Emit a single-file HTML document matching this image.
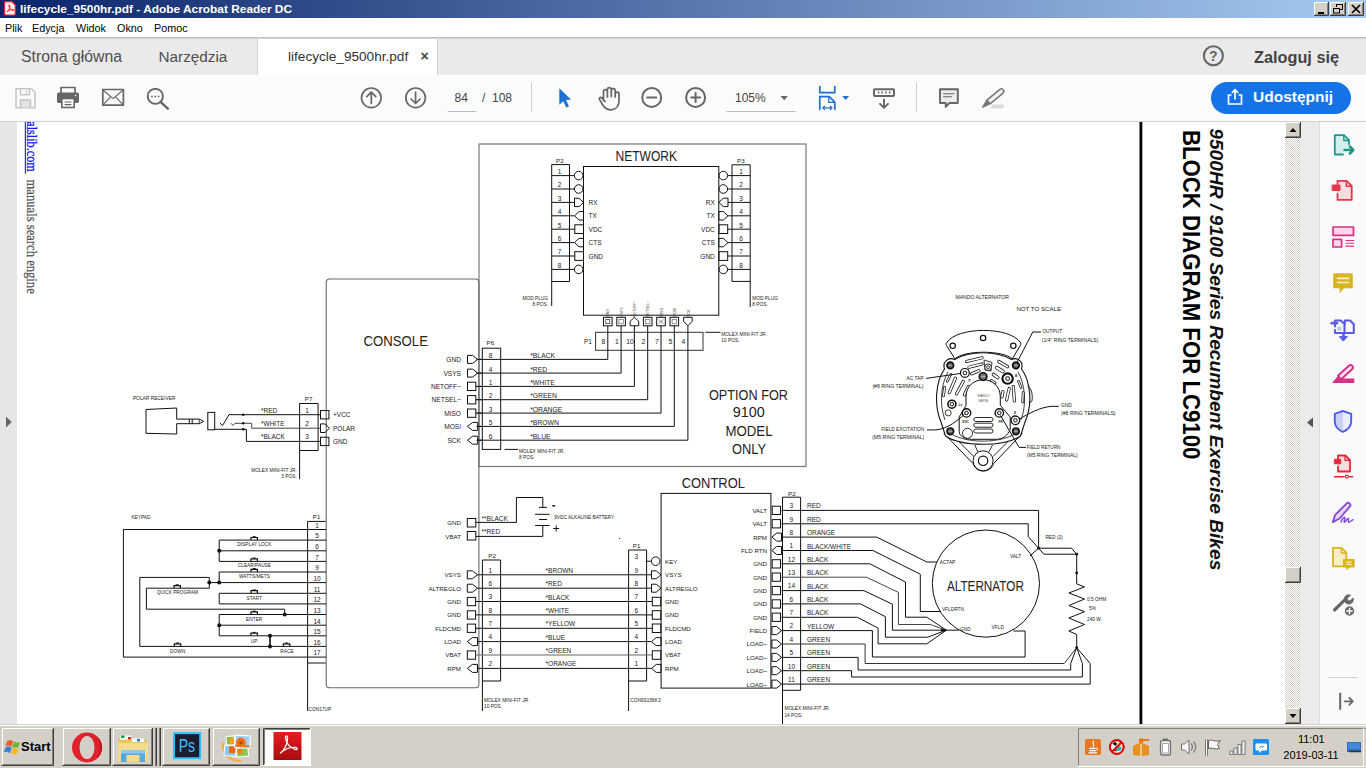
<!DOCTYPE html>
<html><head><meta charset="utf-8">
<style>
*{box-sizing:border-box;margin:0;padding:0}
html,body{width:1366px;height:768px;overflow:hidden;background:#fff;font-family:"Liberation Sans",sans-serif;}
.abs{position:absolute}
#title{left:0;top:0;width:1366px;height:18px;background:linear-gradient(90deg,#0a246a 0%,#a6caf0 100%);}
#title .t{left:20px;top:1px;color:#fff;font-weight:bold;font-size:12.5px;line-height:16px;white-space:nowrap}
#menu{left:0;top:18px;width:1366px;height:20px;background:#fff;border-bottom:1px solid #c0c0c0}
#menu span{position:absolute;top:3px;font-size:10.800px;line-height:14px;color:#000}
#tabs{left:0;top:38px;width:1366px;height:37px;background:#eaeaea;border-top:1px solid #d4d4d4}
#tabs .tb{position:absolute;top:8px;font-size:16px;line-height:20px;color:#505050;white-space:nowrap}
#atab{left:257px;top:0;width:181px;height:36px;background:#fff;border-left:1px solid #d0d0d0;border-right:1px solid #d0d0d0}
#tool{left:0;top:75px;width:1366px;height:47px;background:#fbfbfb;border-bottom:1px solid #cfcfcf}
#doc{left:0;top:122px;width:1366px;height:602px;background:#fff}
#lstrip{left:0;top:122px;width:17px;height:602px;background:#e6e6e6}
#task{left:0;top:724px;width:1366px;height:44px;background:#d4d0c8}
.tbtn{position:absolute;top:3px;height:40px;border:1px solid;border-color:#fff #404040 #404040 #fff;box-shadow:inset -1px -1px 0 #808080;background:#d4d0c8}
</style></head><body>
<div id="title" class="abs"><svg class="abs" style="left:0;top:0" width="320" height="18"><text x="20" y="12.800" font-family="Liberation Sans" font-weight="bold" font-size="11.500" fill="#fff" textLength="272" lengthAdjust="spacingAndGlyphs">lifecycle_9500hr.pdf - Adobe Acrobat Reader DC</text></svg>
<svg class="abs" style="left:3px;top:0" width="14" height="17" viewBox="3 0 14 17"><path d="M5.800 1.700h6.200l3.300 3.300v8.800c0 .8-.5 1.300-1.300 1.300h-8.200c-.8 0-1.300-.5-1.300-1.300v-10.800c0-.8.500-1.300 1.300-1.300z" fill="#fdf4f4" stroke="#e8202c" stroke-width="1.300"/><path d="M7 11.800c2-1.800 3.200-4.500 2.800-6.300c-.2-.9-1-.7-.9.200c.3 2.200 2 4.300 4.200 4.700c.9.100 1-.8.100-.9c-2.200-.1-4.700.8-6.200 2.300z" fill="none" stroke="#e8202c" stroke-width="1"/></svg>
</div>
<div id="menu" class="abs"><span style="left:5px">Plik</span><span style="left:32px">Edycja</span><span style="left:76px">Widok</span><span style="left:117px">Okno</span><span style="left:154px">Pomoc</span></div>
<div id="tabs" class="abs">
<div class="tb" style="left:21px;font-size:15.800px">Strona główna</div>
<div class="tb" style="left:158.500px;font-size:15.300px">Narzędzia</div>
<div id="atab" class="abs"><div class="tb" style="left:30px;top:8px;font-size:13.600px;color:#333">lifecycle_9500hr.pdf</div><div class="tb" style="left:162.500px;top:7px;font-size:14px;color:#444;font-weight:bold">×</div></div>
<div class="tb" style="left:1254px;font-weight:bold;color:#444;font-size:16.300px">Zaloguj się</div>
</div>
<div id="tool" class="abs">
<svg class="abs" style="left:0;top:0" width="1366" height="46" viewBox="0 75 1366 46" fill="none" stroke-linecap="round" stroke-linejoin="round">
<!-- save -->
<g stroke="#c4c4c4" stroke-width="1.5"><path d="M16 88.7h15.5l3.5 3.5v15.5h-19z"/><path d="M20.5 88.7v6h9v-6" /><path d="M20.5 107.5v-7.5h10v7.5" fill="#e2e2e2"/><path d="M26.5 90.5v2.5" stroke-width="1.2"/></g>
<!-- print -->
<g><path d="M61 93v-5.5h14v5.5" stroke="#666" stroke-width="1.7"/><rect x="57" y="92.5" width="22" height="10.5" rx="1.8" fill="#666"/><rect x="61.8" y="98.5" width="12.4" height="9" fill="#fbfbfb" stroke="#666" stroke-width="1.6"/><path d="M65 102h6M65 104.6h6" stroke="#666" stroke-width="1.1"/><circle cx="75.6" cy="95.4" r="0.8" fill="#fff"/></g>
<!-- mail -->
<g stroke="#666" stroke-width="1.7"><rect x="102.8" y="89.5" width="20.6" height="15.6"/><path d="M103 90l10.1 8.6L123.2 90M103 104.8l7.4-7.6M123.2 104.8l-7.4-7.6" stroke-width="1.2"/></g>
<!-- search -->
<g stroke="#666"><circle cx="155.3" cy="96.3" r="7.6" stroke-width="1.9"/><path d="M161 102.3l6.8 6.4" stroke-width="2.4"/><g fill="#666" stroke="none"><circle cx="152" cy="96.4" r="0.9"/><circle cx="155.3" cy="96.4" r="0.9"/><circle cx="158.6" cy="96.4" r="0.9"/></g></g>
<!-- up/down -->
<g stroke="#666" stroke-width="1.7"><circle cx="371.3" cy="97.8" r="9.8"/><path d="M371.3 103.5v-11M366.8 96.6l4.5-4.5 4.5 4.5"/><circle cx="415.6" cy="97.8" r="9.8"/><path d="M415.6 92.2v11M411.1 99l4.5 4.5 4.5-4.5"/></g>
<path d="M448 111.5h28" stroke="#bdbdbd" stroke-width="1"/>
<path d="M531.5 83v29" stroke="#d0d0d0" stroke-width="1"/>
<!-- pointer -->
<path d="M559.3 88.2v16.6l3.9-3.6 3.1 6.4 2.7-1.3-3-6.2 5-.5z" fill="#1e6fcf" stroke="none"/>
<!-- hand -->
<g stroke="#666" stroke-width="1.700"><path d="M603.500 100.500V91.500a1.950 1.950 0 0 1 3.900 0V97M607.400 96.500V89.500a1.950 1.950 0 0 1 3.900 0V96.500M611.300 96.500V90.500a1.950 1.950 0 0 1 3.900 0V97M615.200 97V94a1.900 1.900 0 0 1 3.800 0V101c0 5.500-3.500 8.800-8.500 8.800c-4.500 0-6.300-2.200-8.300-5.800l-2.600-4.400c-1-1.800 1.400-3 2.600-1.500l2.800 3.400"/></g>
<!-- minus plus -->
<g stroke="#666" stroke-width="2"><circle cx="651.700" cy="97.400" r="9.500"/><path d="M647.200 97.400h9"/><circle cx="695.600" cy="97.400" r="9.500"/><path d="M691.100 97.400h9M695.600 92.900v9"/></g>
<path d="M727 111.500h68" stroke="#bdbdbd" stroke-width="1"/>
<path d="M780.500 96l3.700 4.200 3.700-4.200z" fill="#666" stroke="none"/>
<!-- fit -->
<g stroke="#1e6fcf" stroke-width="1.7" stroke-linecap="butt" stroke-linejoin="miter"><path d="M819.800 86v6.700h15v-6.700"/><path d="M819.800 110v-13.400h9.400l5.600 5.600v7.800"/><path d="M828.800 96.800v5.600h5.800" stroke-width="1.300"/><path d="M822.800 107.800h9.200M824.800 105.800l-2 2 2 2M830 105.800l2 2-2 2" stroke-width="1.200"/></g>
<path d="M842.300 96l3.400 3.900 3.400-3.900z" fill="#1e6fcf" stroke="none"/>
<!-- keyboard -->
<g stroke="#666"><rect x="874" y="89.300" width="20" height="6.700" rx="0.800" stroke-width="2"/><path d="M877.800 92.600h1.500M881.500 92.600h1.500M885.200 92.600h1.500M888.900 92.600h1.500" stroke-width="2" stroke-linecap="butt"/><path d="M884 99.500v8M880 103.800l4 4 4-4" stroke-width="1.900"/></g>
<path d="M916.500 83v29" stroke="#d0d0d0" stroke-width="1"/>
<!-- comment -->
<g stroke="#666"><path d="M940 89.300h17.800v13.700h-8.400l-3.700 3.900v-3.900h-5.700z" stroke-width="1.900" fill="#ededed"/><path d="M943.500 93.800h10.500M943.500 96.800h8" stroke-width="1.100"/></g>
<!-- highlighter -->
<g><path d="M990 108.300h13.700v-3.700h-10.500z" fill="#dadada"/><path d="M986.900 100.100L999.900 89.300a2.500 2.500 0 0 1 3.200 3.800L990.100 103.900Z" stroke="#777" stroke-width="1.500" fill="#f1f1f1"/><path d="M986.700 100.300L990 104.100L985.800 106.200L982 107.800L984.200 103.800Z" fill="#777" stroke="#777" stroke-width=".6"/></g>
</svg>
<div class="abs" style="left:454.500px;top:16px;font-size:12px;color:#444">84</div>
<div class="abs" style="left:482px;top:16px;font-size:12px;color:#444;white-space:pre">/  108</div>
<div class="abs" style="left:735px;top:16px;font-size:12px;color:#444">105%</div>
<div class="abs" style="left:1211px;top:7px;width:140px;height:32px;border-radius:16px;background:#1473e6"></div>
<div class="abs" style="left:1253px;top:12px;font-size:15.500px;font-weight:bold;color:#fff;line-height:20px">Udostępnij</div>
<svg class="abs" style="left:1226px;top:13px" width="18" height="18" viewBox="0 0 18 18" fill="none" stroke="#fff" stroke-width="1.700"><path d="M5.500 7h-3v9h13v-9h-3"/><path d="M9 11.500v-9.500M5.800 5l3.200-3.200 3.200 3.200"/></svg>
</div>
<div id="doc" class="abs"></div>
<div id="lstrip" class="abs"></div>
<!--DIAGRAM-->
<svg class="abs" style="left:0;top:122px" width="1284" height="602" viewBox="0 122 1284 602" font-family="Liberation Sans, sans-serif">
<rect x="1139.500" y="122" width="2.800" height="602" fill="#000"/>
<rect x="479" y="144" width="327" height="322.5" stroke="#777" stroke-width="1.2" fill="none"/>
<rect x="583.5" y="166.5" width="135.3" height="148.7" stroke="#111" stroke-width="1" fill="none"/>
<text x="615.5" y="160.6" font-size="14.6" textLength="61.5" lengthAdjust="spacingAndGlyphs" fill="#222" >NETWORK</text>
<path d="M551.7 306 L551.7 164.6 L569.5 164.6 L569.5 281.5 L551.7 281.5" stroke="#111" stroke-width="1" fill="none" />
<path d="M732 281.4 L732 164.8 L750.2 164.8 L750.2 307" stroke="#111" stroke-width="1" fill="none" />
<path d="M732 281.4 L750.2 281.4" stroke="#111" stroke-width="1" fill="none" />
<text x="556" y="163" font-size="6.2" fill="#222" >P2</text>
<text x="737" y="163" font-size="6.2" fill="#222" >P3</text>
<text x="559.5" y="174" font-size="6.5" text-anchor="middle" fill="#222" >1</text>
<text x="741" y="174" font-size="6.5" text-anchor="middle" fill="#222" >1</text>
<text x="559.5" y="187.4" font-size="6.5" text-anchor="middle" fill="#222" >2</text>
<text x="741" y="187.4" font-size="6.5" text-anchor="middle" fill="#222" >2</text>
<text x="559.5" y="200.8" font-size="6.5" text-anchor="middle" fill="#222" >3</text>
<text x="741" y="200.8" font-size="6.5" text-anchor="middle" fill="#222" >3</text>
<text x="559.5" y="214.2" font-size="6.5" text-anchor="middle" fill="#222" >4</text>
<text x="741" y="214.2" font-size="6.5" text-anchor="middle" fill="#222" >4</text>
<text x="559.5" y="227.6" font-size="6.5" text-anchor="middle" fill="#222" >5</text>
<text x="741" y="227.6" font-size="6.5" text-anchor="middle" fill="#222" >5</text>
<text x="559.5" y="241" font-size="6.5" text-anchor="middle" fill="#222" >6</text>
<text x="741" y="241" font-size="6.5" text-anchor="middle" fill="#222" >6</text>
<text x="559.5" y="254.4" font-size="6.5" text-anchor="middle" fill="#222" >7</text>
<text x="741" y="254.4" font-size="6.5" text-anchor="middle" fill="#222" >7</text>
<text x="559.5" y="267.8" font-size="6.5" text-anchor="middle" fill="#222" >8</text>
<text x="741" y="267.8" font-size="6.5" text-anchor="middle" fill="#222" >8</text>
<circle cx="578.7" cy="175.6" r="4.3" stroke="#111" stroke-width="1" fill="none"/>
<path d="M551.7 175.6 L574.4 175.6" stroke="#111" stroke-width="1" fill="none" />
<circle cx="723.3" cy="175.6" r="4.3" stroke="#111" stroke-width="1" fill="none"/>
<path d="M727.6 175.6 L750.2 175.6" stroke="#111" stroke-width="1" fill="none" />
<circle cx="578.7" cy="189" r="4.3" stroke="#111" stroke-width="1" fill="none"/>
<path d="M551.7 189 L574.4 189" stroke="#111" stroke-width="1" fill="none" />
<circle cx="723.3" cy="189" r="4.3" stroke="#111" stroke-width="1" fill="none"/>
<path d="M727.6 189 L750.2 189" stroke="#111" stroke-width="1" fill="none" />
<path d="M574.5 198.2H579L583.5 202.4L579 206.6H574.5Z" stroke="#111" fill="none"/>
<path d="M551.7 202.4 L574.5 202.4" stroke="#111" stroke-width="1" fill="none" />
<path d="M728 198.2H723.4L718.8 202.4L723.4 206.6H728Z" stroke="#111" fill="none"/>
<path d="M728 202.4 L750.2 202.4" stroke="#111" stroke-width="1" fill="none" />
<text x="588.6" y="204.9" font-size="6.5" fill="#222" >RX</text>
<text x="714.8" y="204.9" font-size="6.5" text-anchor="end" fill="#222" >RX</text>
<path d="M583.5 211.6H579L574.5 215.8L579 220H583.5Z" stroke="#111" fill="none"/>
<path d="M551.7 215.8 L574.5 215.8" stroke="#111" stroke-width="1" fill="none" />
<path d="M718.8 211.6H723.4L728 215.8L723.4 220H718.8Z" stroke="#111" fill="none"/>
<path d="M728 215.8 L750.2 215.8" stroke="#111" stroke-width="1" fill="none" />
<text x="588.6" y="218.3" font-size="6.5" fill="#222" >TX</text>
<text x="714.8" y="218.3" font-size="6.5" text-anchor="end" fill="#222" >TX</text>
<rect x="574.8" y="224.8" width="8.7" height="8.7" stroke="#111" stroke-width="1" fill="none"/>
<path d="M551.7 229.2 L574.8 229.2" stroke="#111" stroke-width="1" fill="none" />
<rect x="719" y="224.8" width="8.7" height="8.7" stroke="#111" stroke-width="1" fill="none"/>
<path d="M727.7 229.2 L750.2 229.2" stroke="#111" stroke-width="1" fill="none" />
<text x="588.6" y="231.7" font-size="6.5" fill="#222" >VDC</text>
<text x="714.8" y="231.7" font-size="6.5" text-anchor="end" fill="#222" >VDC</text>
<path d="M583.5 238.4H579L574.5 242.6L579 246.8H583.5Z" stroke="#111" fill="none"/>
<path d="M551.7 242.6 L574.5 242.6" stroke="#111" stroke-width="1" fill="none" />
<path d="M718.8 238.4H723.4L728 242.6L723.4 246.8H718.8Z" stroke="#111" fill="none"/>
<path d="M728 242.6 L750.2 242.6" stroke="#111" stroke-width="1" fill="none" />
<text x="588.6" y="245.1" font-size="6.5" fill="#222" >CTS</text>
<text x="714.8" y="245.1" font-size="6.5" text-anchor="end" fill="#222" >CTS</text>
<rect x="574.8" y="251.7" width="8.7" height="8.7" stroke="#111" stroke-width="1" fill="none"/>
<path d="M551.7 256 L574.8 256" stroke="#111" stroke-width="1" fill="none" />
<rect x="719" y="251.7" width="8.7" height="8.7" stroke="#111" stroke-width="1" fill="none"/>
<path d="M727.7 256 L750.2 256" stroke="#111" stroke-width="1" fill="none" />
<text x="588.6" y="258.5" font-size="6.5" fill="#222" >GND</text>
<text x="714.8" y="258.5" font-size="6.5" text-anchor="end" fill="#222" >GND</text>
<circle cx="578.7" cy="269.4" r="4.3" stroke="#111" stroke-width="1" fill="none"/>
<path d="M551.7 269.4 L574.4 269.4" stroke="#111" stroke-width="1" fill="none" />
<circle cx="723.3" cy="269.4" r="4.3" stroke="#111" stroke-width="1" fill="none"/>
<path d="M727.6 269.4 L750.2 269.4" stroke="#111" stroke-width="1" fill="none" />
<text x="548" y="299.5" font-size="4.8" text-anchor="end" fill="#222" >MOD PLUG</text>
<text x="548" y="305.5" font-size="4.8" text-anchor="end" fill="#222" >8 POS.</text>
<text x="752.3" y="299.5" font-size="4.8" fill="#222" >MOD PLUG</text>
<text x="752.3" y="305.5" font-size="4.8" fill="#222" >8 POS.</text>
<rect x="603.5" y="317.3" width="8.6" height="8.5" stroke="#111" stroke-width="1" fill="none"/>
<rect x="605.8" y="319.5" width="4" height="4.1" stroke="#444" stroke-width="0.8" fill="none"/>
<text transform="translate(609.4 317) rotate(-90)" font-size="3.6" fill="#333">GND</text>
<rect x="616.8" y="317.3" width="8.6" height="8.5" stroke="#111" stroke-width="1" fill="none"/>
<rect x="618.9" y="319.3" width="4.4" height="4.5" stroke="#666" stroke-width="0.7" fill="none"/>
<text transform="translate(622.7 317) rotate(-90)" font-size="3.6" fill="#333">VSYS</text>
<path d="M630.1 325.8V321.3L634.4 317.3L638.7 321.3V325.8Z" stroke="#111" fill="none"/>
<text transform="translate(636 317) rotate(-90)" font-size="3.6" fill="#333">NETOFF~</text>
<rect x="643.4" y="317.3" width="8.6" height="8.5" stroke="#111" stroke-width="1" fill="none"/>
<rect x="645.5" y="319.3" width="4.4" height="4.5" stroke="#666" stroke-width="0.7" fill="none"/>
<text transform="translate(649.3 317) rotate(-90)" font-size="3.6" fill="#333">NETSEL~</text>
<rect x="656.7" y="317.3" width="8.6" height="8.5" stroke="#111" stroke-width="1" fill="none"/>
<path d="M658.5 319.3 L663.5 323.8" stroke="#555" stroke-width="0.7" fill="none" />
<path d="M663.5 319.3 L658.5 323.8" stroke="#555" stroke-width="0.7" fill="none" />
<text transform="translate(662.6 317) rotate(-90)" font-size="3.6" fill="#333">MISO</text>
<rect x="670" y="317.3" width="8.6" height="8.5" stroke="#111" stroke-width="1" fill="none"/>
<rect x="672.1" y="319.3" width="4.4" height="4.5" stroke="#666" stroke-width="0.7" fill="none"/>
<text transform="translate(675.9 317) rotate(-90)" font-size="3.6" fill="#333">MOSI</text>
<path d="M683.6 317.3V321.3L687.9 325.8L692.2 321.3V317.3Z" stroke="#111" fill="none"/>
<text transform="translate(689.5 317) rotate(-90)" font-size="3.6" fill="#333">SCK</text>
<rect x="595.6" y="332.3" width="107.4" height="18" stroke="#333" stroke-width="1" fill="none"/>
<text x="584" y="344" font-size="6.5" fill="#222" >P1</text>
<text x="603.3" y="344" font-size="6.8" text-anchor="middle" fill="#222" >8</text>
<text x="617" y="344" font-size="6.8" text-anchor="middle" fill="#222" >1</text>
<text x="630" y="344" font-size="6.8" text-anchor="middle" fill="#222" >10</text>
<text x="643.5" y="344" font-size="6.8" text-anchor="middle" fill="#222" >2</text>
<text x="657" y="344" font-size="6.8" text-anchor="middle" fill="#222" >7</text>
<text x="670.3" y="344" font-size="6.8" text-anchor="middle" fill="#222" >5</text>
<text x="683.5" y="344" font-size="6.8" text-anchor="middle" fill="#222" >4</text>
<path d="M705.4 332.3 L720.5 332.3" stroke="#111" stroke-width="1" fill="none" />
<text x="721.3" y="336" font-size="4.8" fill="#222" >MOLEX MINI-FIT JR.</text>
<text x="721.3" y="342" font-size="4.8" fill="#222" >10 POS.</text>
<rect x="482.3" y="348.2" width="18.4" height="101.2" stroke="#111" stroke-width="1" fill="none"/>
<text x="486.5" y="344.5" font-size="6.2" fill="#222" >P6</text>
<path d="M476.5 359.4 L607.8 359.4 L607.8 325.8" stroke="#111" stroke-width="1" fill="none" />
<text x="490.6" y="358.1" font-size="6.5" text-anchor="middle" fill="#222" >8</text>
<text x="530.2" y="358.1" font-size="6.8" fill="#222" >*BLACK</text>
<path d="M476.5 373.1 L621.1 373.1 L621.1 325.8" stroke="#111" stroke-width="1" fill="none" />
<text x="490.6" y="371.8" font-size="6.5" text-anchor="middle" fill="#222" >4</text>
<text x="530.2" y="371.8" font-size="6.8" fill="#222" >*RED</text>
<path d="M476.5 386.4 L634.4 386.4 L634.4 325.8" stroke="#111" stroke-width="1" fill="none" />
<text x="490.6" y="385.1" font-size="6.5" text-anchor="middle" fill="#222" >1</text>
<text x="530.2" y="385.1" font-size="6.8" fill="#222" >*WHITE</text>
<path d="M476.5 399.7 L647.7 399.7 L647.7 325.8" stroke="#111" stroke-width="1" fill="none" />
<text x="490.6" y="398.4" font-size="6.5" text-anchor="middle" fill="#222" >2</text>
<text x="530.2" y="398.4" font-size="6.8" fill="#222" >*GREEN</text>
<path d="M476.5 413.1 L661 413.1 L661 325.8" stroke="#111" stroke-width="1" fill="none" />
<text x="490.6" y="411.8" font-size="6.5" text-anchor="middle" fill="#222" >3</text>
<text x="530.2" y="411.8" font-size="6.8" fill="#222" >*ORANGE</text>
<path d="M476.5 426.4 L674.3 426.4 L674.3 325.8" stroke="#111" stroke-width="1" fill="none" />
<text x="490.6" y="425.1" font-size="6.5" text-anchor="middle" fill="#222" >5</text>
<text x="530.2" y="425.1" font-size="6.8" fill="#222" >*BROWN</text>
<path d="M476.5 440.2 L687.9 440.2 L687.9 325.8" stroke="#111" stroke-width="1" fill="none" />
<text x="490.6" y="438.9" font-size="6.5" text-anchor="middle" fill="#222" >6</text>
<text x="530.2" y="438.9" font-size="6.8" fill="#222" >*BLUE</text>
<path d="M504.6 449.4 L518 449.4" stroke="#111" stroke-width="1" fill="none" />
<text x="519" y="453" font-size="4.8" fill="#222" >MOLEX MINI-FIT JR.</text>
<text x="519" y="459" font-size="4.8" fill="#222" >8 POS.</text>
<text x="748.5" y="400" font-size="14.3" text-anchor="middle" textLength="79" lengthAdjust="spacingAndGlyphs" fill="#222" >OPTION FOR</text>
<text x="748.8" y="417.3" font-size="14.3" text-anchor="middle" textLength="32" lengthAdjust="spacingAndGlyphs" fill="#222" >9100</text>
<text x="749" y="436" font-size="14.3" text-anchor="middle" textLength="47" lengthAdjust="spacingAndGlyphs" fill="#222" >MODEL</text>
<text x="749" y="453.8" font-size="14.3" text-anchor="middle" textLength="34" lengthAdjust="spacingAndGlyphs" fill="#222" >ONLY</text>
<rect x="326.2" y="279" width="152.7" height="408.8" stroke="#666" stroke-width="1.1" fill="none" rx="3.5"/>
<text x="363.5" y="346" font-size="14.6" textLength="64.5" lengthAdjust="spacingAndGlyphs" fill="#222" >CONSOLE</text>
<text x="461" y="361.8" font-size="6.6" text-anchor="end" fill="#222" >GND</text>
<path d="M467.5 355.4H472.6L477.7 359.4L472.6 363.4H467.5Z" stroke="#111" fill="none"/>
<path d="M477.7 359.4 L482.3 359.4" stroke="#111" stroke-width="1" fill="none" />
<text x="461" y="375.5" font-size="6.6" text-anchor="end" fill="#222" >VSYS</text>
<path d="M467.5 369.1H472.6L477.7 373.1L472.6 377.1H467.5Z" stroke="#111" fill="none"/>
<path d="M477.7 373.1 L482.3 373.1" stroke="#111" stroke-width="1" fill="none" />
<text x="461" y="388.8" font-size="6.6" text-anchor="end" fill="#222" >NETOFF~</text>
<rect x="467.5" y="382.2" width="8.3" height="8.3" stroke="#111" stroke-width="1" fill="none"/>
<path d="M475.8 386.4 L482.3 386.4" stroke="#111" stroke-width="1" fill="none" />
<text x="461" y="402.1" font-size="6.6" text-anchor="end" fill="#222" >NETSEL~</text>
<rect x="467.5" y="395.6" width="8.3" height="8.3" stroke="#111" stroke-width="1" fill="none"/>
<path d="M475.8 399.7 L482.3 399.7" stroke="#111" stroke-width="1" fill="none" />
<text x="461" y="415.5" font-size="6.6" text-anchor="end" fill="#222" >MISO</text>
<rect x="467.5" y="409" width="8.3" height="8.3" stroke="#111" stroke-width="1" fill="none"/>
<path d="M475.8 413.1 L482.3 413.1" stroke="#111" stroke-width="1" fill="none" />
<text x="461" y="428.8" font-size="6.6" text-anchor="end" fill="#222" >MOSI</text>
<path d="M477.7 422.4H472.6L467.5 426.4L472.6 430.4H477.7Z" stroke="#111" fill="none"/>
<path d="M477.7 426.4 L482.3 426.4" stroke="#111" stroke-width="1" fill="none" />
<text x="461" y="442.6" font-size="6.6" text-anchor="end" fill="#222" >SCK</text>
<path d="M477.7 436.2H472.6L467.5 440.2L472.6 444.2H477.7Z" stroke="#111" fill="none"/>
<path d="M477.7 440.2 L482.3 440.2" stroke="#111" stroke-width="1" fill="none" />
<path d="M299.6 479.2 L299.6 403.5 L318.1 403.5 L318.1 450.5 L299.6 450.5" stroke="#111" stroke-width="1" fill="none" />
<text x="304.8" y="400.6" font-size="6.2" fill="#222" >P7</text>
<text x="307" y="412.5" font-size="6.5" text-anchor="middle" fill="#222" >1</text>
<text x="307" y="426" font-size="6.5" text-anchor="middle" fill="#222" >2</text>
<text x="307" y="439.2" font-size="6.5" text-anchor="middle" fill="#222" >3</text>
<rect x="320.5" y="410.5" width="8.4" height="8.4" stroke="#111" stroke-width="1" fill="none"/>
<path d="M320.5 423.9H325L329.5 428.2L325 432.5H320.5Z" stroke="#111" fill="none"/>
<rect x="320.5" y="437.2" width="8.4" height="8.4" stroke="#111" stroke-width="1" fill="none"/>
<text x="333" y="417.2" font-size="6.5" fill="#222" >+VCC</text>
<text x="333" y="430.8" font-size="6.5" fill="#222" >POLAR</text>
<text x="333" y="444" font-size="6.5" fill="#222" >GND</text>
<text x="261" y="412.7" font-size="6.5" fill="#222" >*RED</text>
<text x="261" y="426" font-size="6.5" fill="#222" >*WHITE</text>
<text x="261" y="439.3" font-size="6.5" fill="#222" >*BLACK</text>
<path d="M220 423 L222.5 425.6 L229 414.7 L320.5 414.7" stroke="#111" stroke-width="1" fill="none" />
<circle cx="243.2" cy="414.7" r="1.3" fill="#111"/>
<path d="M231 423.3 L233 425.5 L235 423.3 L251.7 423.3 L251.7 428.2 L320.5 428.2" stroke="#444" stroke-width="1" fill="none" />
<circle cx="243.2" cy="423.3" r="1.3" fill="#111"/>
<path d="M214.7 429.3 L246.4 429.3 L246.4 441.4 L320.5 441.4" stroke="#111" stroke-width="1" fill="none" />
<circle cx="243.2" cy="429.3" r="1.3" fill="#111"/>
<rect x="207.8" y="412.4" width="6.9" height="17.4" stroke="#111" stroke-width="1" fill="none"/>
<path d="M146 409.500L176.700 408V419.100H199.200L203.700 421.400L199.200 423.700H176.700V434L146 433.300Z" stroke="#111" fill="none"/>
<path d="M189.3 419.1 L189.3 423.7" stroke="#111" stroke-width="1" fill="none" />
<path d="M192.2 419.1 L192.2 423.7" stroke="#111" stroke-width="1" fill="none" />
<path d="M199.2 419.1 L199.2 423.7" stroke="#111" stroke-width="0.8" fill="none" />
<text x="132.9" y="399.5" font-size="4.8" textLength="42.5" lengthAdjust="spacingAndGlyphs" fill="#222" >POLAR RECEIVER</text>
<text x="296.8" y="471.6" font-size="4.8" text-anchor="end" fill="#222" >MOLEX MINI-FIT JR.</text>
<text x="296.8" y="478" font-size="4.8" text-anchor="end" fill="#222" >3 POS.</text>
<path d="M307.6 711 L307.6 521.4 L325.6 521.4" stroke="#111" stroke-width="1" fill="none" />
<path d="M307.6 663 L325.6 663" stroke="#111" stroke-width="1" fill="none" />
<text x="312.8" y="518.8" font-size="6.2" fill="#222" >P1</text>
<text x="317" y="527.8" font-size="6.5" text-anchor="middle" fill="#222" >1</text>
<text x="317" y="538.4" font-size="6.5" text-anchor="middle" fill="#222" >5</text>
<text x="317" y="549.1" font-size="6.5" text-anchor="middle" fill="#222" >6</text>
<text x="317" y="559.7" font-size="6.5" text-anchor="middle" fill="#222" >7</text>
<text x="317" y="570.3" font-size="6.5" text-anchor="middle" fill="#222" >9</text>
<text x="317" y="580.9" font-size="6.5" text-anchor="middle" fill="#222" >10</text>
<text x="317" y="591.6" font-size="6.5" text-anchor="middle" fill="#222" >11</text>
<text x="317" y="602.2" font-size="6.5" text-anchor="middle" fill="#222" >12</text>
<text x="317" y="612.8" font-size="6.5" text-anchor="middle" fill="#222" >13</text>
<text x="317" y="623.5" font-size="6.5" text-anchor="middle" fill="#222" >14</text>
<text x="317" y="634.1" font-size="6.5" text-anchor="middle" fill="#222" >15</text>
<text x="317" y="644.7" font-size="6.5" text-anchor="middle" fill="#222" >16</text>
<text x="317" y="655.4" font-size="6.5" text-anchor="middle" fill="#222" >17</text>
<path d="M326 529.5 L123.4 529.5 L123.4 657.1 L326 657.1" stroke="#111" stroke-width="1" fill="none" />
<path d="M326 540.1 L219.2 540.1 L219.2 561.4 L326 561.4" stroke="#111" stroke-width="1" fill="none" />
<path d="M219.2 550.8 L326 550.8" stroke="#111" stroke-width="1" fill="none" />
<circle cx="219.2" cy="550.8" r="2" fill="#111"/>
<path d="M326 572 L219.2 572 L219.2 582.6" stroke="#111" stroke-width="1" fill="none" />
<path d="M209.3 582.6 L326 582.6" stroke="#111" stroke-width="1" fill="none" />
<circle cx="219.2" cy="582.6" r="2" fill="#111"/>
<circle cx="209.3" cy="582.6" r="2" fill="#111"/>
<path d="M209.3 582.6 L209.3 577.4 L139.8 577.4 L139.8 646.4 L326 646.4" stroke="#111" stroke-width="1" fill="none" />
<path d="M209.3 582.6 L209.3 588.2 L146.4 588.2 L146.4 609.2 L284.7 609.2 L284.7 614.5" stroke="#111" stroke-width="1" fill="none" />
<path d="M326 593.3 L219.2 593.3 L219.2 603.9 L326 603.9" stroke="#111" stroke-width="1" fill="none" />
<path d="M326 614.5 L219.2 614.5 L219.2 635.8 L326 635.8" stroke="#111" stroke-width="1" fill="none" />
<circle cx="284.7" cy="614.5" r="2" fill="#111"/>
<path d="M219.2 625.2 L326 625.2" stroke="#111" stroke-width="1" fill="none" />
<circle cx="219.2" cy="625.2" r="2" fill="#111"/>
<circle cx="270" cy="635.8" r="2" fill="#111"/>
<circle cx="270" cy="646.4" r="2" fill="#111"/>
<path d="M270 635.8 L270 646.4" stroke="#111" stroke-width="1.6" fill="none" />
<path d="M251 540.1V537.5H257.4V540.1" stroke="#111" stroke-width="1.200" fill="none"/>
<path d="M252.7 536.7 L255.7 536.7" stroke="#111" stroke-width="1" fill="none" />
<path d="M251 561.4V558.8H257.4V561.4" stroke="#111" stroke-width="1.200" fill="none"/>
<path d="M252.7 558 L255.7 558" stroke="#111" stroke-width="1" fill="none" />
<path d="M251 572V569.4H257.4V572" stroke="#111" stroke-width="1.200" fill="none"/>
<path d="M252.7 568.6 L255.7 568.6" stroke="#111" stroke-width="1" fill="none" />
<path d="M174 588.2V585.6H180.4V588.2" stroke="#111" stroke-width="1.200" fill="none"/>
<path d="M175.7 584.8 L178.7 584.8" stroke="#111" stroke-width="1" fill="none" />
<path d="M251 593.3V590.7H257.4V593.3" stroke="#111" stroke-width="1.200" fill="none"/>
<path d="M252.7 589.9 L255.7 589.9" stroke="#111" stroke-width="1" fill="none" />
<path d="M251 614.5V611.9H257.4V614.5" stroke="#111" stroke-width="1.200" fill="none"/>
<path d="M252.7 611.1 L255.7 611.1" stroke="#111" stroke-width="1" fill="none" />
<path d="M251 635.8V633.2H257.4V635.8" stroke="#111" stroke-width="1.200" fill="none"/>
<path d="M252.7 632.4 L255.7 632.4" stroke="#111" stroke-width="1" fill="none" />
<path d="M174.3 646.4V643.8H180.7V646.4" stroke="#111" stroke-width="1.200" fill="none"/>
<path d="M176 643 L179 643" stroke="#111" stroke-width="1" fill="none" />
<path d="M283.4 646.4V643.8H289.8V646.4" stroke="#111" stroke-width="1.200" fill="none"/>
<path d="M285.1 643 L288.1 643" stroke="#111" stroke-width="1" fill="none" />
<text x="131.4" y="519" font-size="4.8" fill="#222" >KEYPAD</text>
<text x="254.4" y="546" font-size="4.8" text-anchor="middle" fill="#222" >DISPLAY LOCK</text>
<text x="254.4" y="567" font-size="4.8" text-anchor="middle" fill="#222" >CLEAR/PAUSE</text>
<text x="254.4" y="577.7" font-size="4.8" text-anchor="middle" fill="#222" >WATTS/METS</text>
<text x="177.3" y="594" font-size="4.8" text-anchor="middle" fill="#222" >QUICK PROGRAM</text>
<text x="254.2" y="600" font-size="4.8" text-anchor="middle" fill="#222" >START</text>
<text x="254.2" y="620.8" font-size="4.8" text-anchor="middle" fill="#222" >ENTER</text>
<text x="254.2" y="642.5" font-size="4.8" text-anchor="middle" fill="#222" >UP</text>
<text x="177.7" y="652.6" font-size="4.8" text-anchor="middle" fill="#222" >DOWN</text>
<text x="287" y="652.6" font-size="4.8" text-anchor="middle" fill="#222" >RACE</text>
<text x="308.6" y="711" font-size="4.8" fill="#222" >CON17UP</text>
<rect x="467.3" y="518.5" width="8.5" height="8.5" stroke="#111" stroke-width="1" fill="none"/>
<rect x="467.3" y="531.5" width="8.5" height="8.5" stroke="#111" stroke-width="1" fill="none"/>
<text x="461" y="525.2" font-size="6.2" text-anchor="end" fill="#222" >GND</text>
<text x="461" y="538.5" font-size="6.2" text-anchor="end" fill="#222" >VBAT</text>
<path d="M475.8 522.4 L516.4 522.4 L516.4 497.5 L542.8 497.5 L542.8 507.4" stroke="#111" stroke-width="1" fill="none" />
<path d="M539 507.4 L547 507.4" stroke="#111" stroke-width="1" fill="none" />
<path d="M535.1 514.3 L549.6 514.3" stroke="#111" stroke-width="1" fill="none" />
<path d="M539 519.5 L547 519.5" stroke="#111" stroke-width="1" fill="none" />
<path d="M535.1 525.5 L549.6 525.5" stroke="#111" stroke-width="1" fill="none" />
<path d="M542.8 525.5 L542.8 536.4 L475.8 536.4" stroke="#111" stroke-width="1" fill="none" />
<path d="M552.2 505.8 L555.2 505.8" stroke="#111" stroke-width="1.4" fill="none" />
<path d="M553.2 528.5 L559.2 528.5" stroke="#111" stroke-width="1" fill="none" />
<path d="M556.2 525.5 L556.2 531.5" stroke="#111" stroke-width="1" fill="none" />
<text x="481.5" y="520.6" font-size="6.5" fill="#222" >**BLACK</text>
<text x="481.5" y="533.7" font-size="6.5" fill="#222" >**RED</text>
<text x="554.2" y="518.6" font-size="4.8" textLength="60" lengthAdjust="spacingAndGlyphs" fill="#222" >9VDC ALKALINE BATTERY</text>
<circle cx="619.7" cy="538.4" r="0.6" fill="#111"/>
<path d="M482.4 711 L482.4 560 L500.6 560 L500.6 681 L482.4 681" stroke="#111" stroke-width="1" fill="none" />
<text x="488.3" y="558.3" font-size="6.2" fill="#222" >P2</text>
<text x="484" y="702" font-size="4.8" fill="#222" >MOLEX MINI-FIT JR.</text>
<text x="484" y="708" font-size="4.8" fill="#222" >10 POS.</text>
<path d="M628.6 711 L628.6 550 L646.6 550 L646.6 681 L628.6 681" stroke="#111" stroke-width="1" fill="none" />
<text x="632.8" y="547.5" font-size="6.2" fill="#222" >P1</text>
<text x="630.2" y="702" font-size="4.8" fill="#222" >CON9S156K3</text>
<text x="636.4" y="558.8" font-size="6.5" text-anchor="middle" fill="#222" >3</text>
<path d="M646.6 561.2 L651.3 561.2" stroke="#111" stroke-width="1" fill="none" />
<circle cx="655.7" cy="561.2" r="4.3" stroke="#111" stroke-width="1" fill="none"/>
<text x="665" y="563.7" font-size="6.2" fill="#222" >KEY</text>
<text x="461" y="577.2" font-size="6.2" text-anchor="end" fill="#222" >VSYS</text>
<path d="M467.3 570.8H472.4L477.5 574.8L472.4 578.8H467.3Z" stroke="#111" fill="none"/>
<path d="M651.5 570.8H656.2L661 574.8L656.2 578.8H651.5Z" stroke="#111" fill="none"/>
<path d="M477.5 574.8 L651.5 574.8" stroke="#111" stroke-width="1" fill="none" />
<text x="490.4" y="572.6" font-size="6.5" text-anchor="middle" fill="#222" >1</text>
<text x="636.4" y="572.6" font-size="6.5" text-anchor="middle" fill="#222" >9</text>
<text x="545.6" y="572.8" font-size="6.5" fill="#222" >*BROWN</text>
<text x="665" y="577.2" font-size="6.2" fill="#222" >VSYS</text>
<text x="461" y="590.6" font-size="6.2" text-anchor="end" fill="#222" >ALTREGLO</text>
<path d="M467.3 584.2H472.4L477.5 588.2L472.4 592.2H467.3Z" stroke="#111" fill="none"/>
<path d="M651.5 584.2H656.2L661 588.2L656.2 592.2H651.5Z" stroke="#111" fill="none"/>
<path d="M477.5 588.2 L651.5 588.2" stroke="#111" stroke-width="1" fill="none" />
<text x="490.4" y="586" font-size="6.5" text-anchor="middle" fill="#222" >6</text>
<text x="636.4" y="586" font-size="6.5" text-anchor="middle" fill="#222" >8</text>
<text x="545.6" y="586.2" font-size="6.5" fill="#222" >*RED</text>
<text x="665" y="590.6" font-size="6.2" fill="#222" >ALTREGLO</text>
<text x="461" y="603.9" font-size="6.2" text-anchor="end" fill="#222" >GND</text>
<rect x="467.3" y="597.4" width="8.3" height="8.3" stroke="#111" stroke-width="1" fill="none"/>
<rect x="652.3" y="597.3" width="8.5" height="8.5" stroke="#111" stroke-width="1" fill="none"/>
<path d="M475.6 601.5 L652.3 601.5" stroke="#111" stroke-width="1" fill="none" />
<text x="490.4" y="599.3" font-size="6.5" text-anchor="middle" fill="#222" >3</text>
<text x="636.4" y="599.3" font-size="6.5" text-anchor="middle" fill="#222" >7</text>
<text x="545.6" y="599.5" font-size="6.5" fill="#222" >*BLACK</text>
<text x="665" y="603.9" font-size="6.2" fill="#222" >GND</text>
<text x="461" y="617.3" font-size="6.2" text-anchor="end" fill="#222" >GND</text>
<rect x="467.3" y="610.8" width="8.3" height="8.3" stroke="#111" stroke-width="1" fill="none"/>
<rect x="652.3" y="610.7" width="8.5" height="8.5" stroke="#111" stroke-width="1" fill="none"/>
<path d="M475.6 614.9 L652.3 614.9" stroke="#111" stroke-width="1" fill="none" />
<text x="490.4" y="612.7" font-size="6.5" text-anchor="middle" fill="#222" >8</text>
<text x="636.4" y="612.7" font-size="6.5" text-anchor="middle" fill="#222" >6</text>
<text x="545.6" y="612.9" font-size="6.5" fill="#222" >*WHITE</text>
<text x="665" y="617.3" font-size="6.2" fill="#222" >GND</text>
<text x="461" y="630.7" font-size="6.2" text-anchor="end" fill="#222" >FLDCMD</text>
<rect x="467.3" y="624.1" width="8.3" height="8.3" stroke="#111" stroke-width="1" fill="none"/>
<rect x="652.3" y="624" width="8.5" height="8.5" stroke="#111" stroke-width="1" fill="none"/>
<path d="M475.6 628.3 L652.3 628.3" stroke="#111" stroke-width="1" fill="none" />
<text x="490.4" y="626.1" font-size="6.5" text-anchor="middle" fill="#222" >7</text>
<text x="636.4" y="626.1" font-size="6.5" text-anchor="middle" fill="#222" >5</text>
<text x="545.6" y="626.3" font-size="6.5" fill="#222" >*YELLOW</text>
<text x="665" y="630.7" font-size="6.2" fill="#222" >FLDCMD</text>
<text x="461" y="644" font-size="6.2" text-anchor="end" fill="#222" >LOAD</text>
<path d="M477.5 637.6H472.4L467.3 641.6L472.4 645.6H477.5Z" stroke="#111" fill="none"/>
<path d="M661 637.6H656.2L651.5 641.6L656.2 645.6H661Z" stroke="#111" fill="none"/>
<path d="M477.5 641.6 L651.5 641.6" stroke="#111" stroke-width="1" fill="none" />
<text x="490.4" y="639.4" font-size="6.5" text-anchor="middle" fill="#222" >4</text>
<text x="636.4" y="639.4" font-size="6.5" text-anchor="middle" fill="#222" >4</text>
<text x="545.6" y="639.6" font-size="6.5" fill="#222" >*BLUE</text>
<text x="665" y="644" font-size="6.2" fill="#222" >LOAD</text>
<text x="461" y="657.4" font-size="6.2" text-anchor="end" fill="#222" >VBAT</text>
<rect x="467.3" y="650.9" width="8.3" height="8.3" stroke="#111" stroke-width="1" fill="none"/>
<rect x="652.3" y="650.8" width="8.5" height="8.5" stroke="#111" stroke-width="1" fill="none"/>
<path d="M475.6 655 L652.3 655" stroke="#666" stroke-width="1" fill="none" />
<text x="490.4" y="652.8" font-size="6.5" text-anchor="middle" fill="#222" >9</text>
<text x="636.4" y="652.8" font-size="6.5" text-anchor="middle" fill="#222" >2</text>
<text x="545.6" y="653" font-size="6.5" fill="#222" >*GREEN</text>
<text x="665" y="657.4" font-size="6.2" fill="#222" >VBAT</text>
<text x="461" y="670.8" font-size="6.2" text-anchor="end" fill="#222" >RPM</text>
<path d="M477.5 664.4H472.4L467.3 668.4L472.4 672.4H477.5Z" stroke="#111" fill="none"/>
<path d="M661 664.4H656.2L651.5 668.4L656.2 672.4H661Z" stroke="#111" fill="none"/>
<path d="M477.5 668.4 L651.5 668.4" stroke="#111" stroke-width="1" fill="none" />
<text x="490.4" y="666.2" font-size="6.5" text-anchor="middle" fill="#222" >2</text>
<text x="636.4" y="666.2" font-size="6.5" text-anchor="middle" fill="#222" >1</text>
<text x="545.6" y="666.4" font-size="6.5" fill="#222" >*ORANGE</text>
<text x="665" y="670.8" font-size="6.2" fill="#222" >RPM</text>
<rect x="661.1" y="493.4" width="109.8" height="194.7" stroke="#111" stroke-width="1" fill="none"/>
<text x="681.7" y="487.9" font-size="14.6" textLength="63.3" lengthAdjust="spacingAndGlyphs" fill="#222" >CONTROL</text>
<path d="M782.5 724 L782.5 497.2 L800.6 497.2 L800.6 690.3 L782.5 690.3" stroke="#111" stroke-width="1" fill="none" />
<text x="788" y="495.5" font-size="6.2" fill="#222" >P2</text>
<text x="784.4" y="710.3" font-size="4.8" fill="#222" >MOLEX MINI-FIT JR.</text>
<text x="784.4" y="717.3" font-size="4.8" fill="#222" >14 POS.</text>
<text x="767" y="512.8" font-size="6.2" text-anchor="end" fill="#222" >VALT</text>
<rect x="772.2" y="506.2" width="8.3" height="8.3" stroke="#111" stroke-width="1" fill="none"/>
<text x="791.4" y="508.2" font-size="6.5" text-anchor="middle" fill="#222" >3</text>
<text x="807" y="508.4" font-size="6.5" fill="#222" >RED</text>
<text x="767" y="526.2" font-size="6.2" text-anchor="end" fill="#222" >VALT</text>
<rect x="772.2" y="519.6" width="8.3" height="8.3" stroke="#111" stroke-width="1" fill="none"/>
<text x="791.4" y="521.6" font-size="6.5" text-anchor="middle" fill="#222" >9</text>
<text x="807" y="521.8" font-size="6.5" fill="#222" >RED</text>
<text x="767" y="539.5" font-size="6.2" text-anchor="end" fill="#222" >RPM</text>
<path d="M781.5 533.1H776.7L771.9 537.1L776.7 541.1H781.5Z" stroke="#111" fill="none"/>
<text x="791.4" y="534.9" font-size="6.5" text-anchor="middle" fill="#222" >8</text>
<text x="807" y="535.1" font-size="6.5" fill="#222" >ORANGE</text>
<text x="767" y="552.9" font-size="6.2" text-anchor="end" fill="#222" >FLD RTN</text>
<path d="M781.5 546.5H776.7L771.9 550.5L776.7 554.5H781.5Z" stroke="#111" fill="none"/>
<text x="791.4" y="548.3" font-size="6.5" text-anchor="middle" fill="#222" >1</text>
<text x="807" y="548.5" font-size="6.5" fill="#222" >BLACK/WHITE</text>
<text x="767" y="566.2" font-size="6.2" text-anchor="end" fill="#222" >GND</text>
<rect x="772.2" y="559.7" width="8.3" height="8.3" stroke="#111" stroke-width="1" fill="none"/>
<text x="791.4" y="561.6" font-size="6.5" text-anchor="middle" fill="#222" >12</text>
<text x="807" y="561.8" font-size="6.5" fill="#222" >BLACK</text>
<text x="767" y="579.6" font-size="6.2" text-anchor="end" fill="#222" >GND</text>
<rect x="772.2" y="573" width="8.3" height="8.3" stroke="#111" stroke-width="1" fill="none"/>
<text x="791.4" y="575" font-size="6.5" text-anchor="middle" fill="#222" >13</text>
<text x="807" y="575.2" font-size="6.5" fill="#222" >BLACK</text>
<text x="767" y="593" font-size="6.2" text-anchor="end" fill="#222" >GND</text>
<rect x="772.2" y="586.4" width="8.3" height="8.3" stroke="#111" stroke-width="1" fill="none"/>
<text x="791.4" y="588.4" font-size="6.5" text-anchor="middle" fill="#222" >14</text>
<text x="807" y="588.6" font-size="6.5" fill="#222" >BLACK</text>
<text x="767" y="606.3" font-size="6.2" text-anchor="end" fill="#222" >GND</text>
<rect x="772.2" y="599.8" width="8.3" height="8.3" stroke="#111" stroke-width="1" fill="none"/>
<text x="791.4" y="601.7" font-size="6.5" text-anchor="middle" fill="#222" >6</text>
<text x="807" y="601.9" font-size="6.5" fill="#222" >BLACK</text>
<text x="767" y="619.7" font-size="6.2" text-anchor="end" fill="#222" >GND</text>
<rect x="772.2" y="613.1" width="8.3" height="8.3" stroke="#111" stroke-width="1" fill="none"/>
<text x="791.4" y="615.1" font-size="6.5" text-anchor="middle" fill="#222" >7</text>
<text x="807" y="615.3" font-size="6.5" fill="#222" >BLACK</text>
<text x="767" y="633" font-size="6.2" text-anchor="end" fill="#222" >FIELD</text>
<path d="M771.9 626.6H776.7L781.5 630.6L776.7 634.6H771.9Z" stroke="#111" fill="none"/>
<text x="791.4" y="628.4" font-size="6.5" text-anchor="middle" fill="#222" >2</text>
<text x="807" y="628.6" font-size="6.5" fill="#222" >YELLOW</text>
<text x="767" y="646.4" font-size="6.2" text-anchor="end" fill="#222" >LOAD~</text>
<path d="M771.9 640H776.7L781.5 644L776.7 648H771.9Z" stroke="#111" fill="none"/>
<text x="791.4" y="641.8" font-size="6.5" text-anchor="middle" fill="#222" >4</text>
<text x="807" y="642" font-size="6.5" fill="#222" >GREEN</text>
<text x="767" y="659.8" font-size="6.2" text-anchor="end" fill="#222" >LOAD~</text>
<path d="M771.9 653.4H776.7L781.5 657.4L776.7 661.4H771.9Z" stroke="#111" fill="none"/>
<text x="791.4" y="655.2" font-size="6.5" text-anchor="middle" fill="#222" >5</text>
<text x="807" y="655.4" font-size="6.5" fill="#222" >GREEN</text>
<text x="767" y="673.1" font-size="6.2" text-anchor="end" fill="#222" >LOAD~</text>
<path d="M771.9 666.7H776.7L781.5 670.7L776.7 674.7H771.9Z" stroke="#111" fill="none"/>
<text x="791.4" y="668.5" font-size="6.5" text-anchor="middle" fill="#222" >10</text>
<text x="807" y="668.7" font-size="6.5" fill="#222" >GREEN</text>
<text x="767" y="686.5" font-size="6.2" text-anchor="end" fill="#222" >LOAD~</text>
<path d="M771.9 680.1H776.7L781.5 684.1L776.7 688.1H771.9Z" stroke="#111" fill="none"/>
<text x="791.4" y="681.9" font-size="6.5" text-anchor="middle" fill="#222" >11</text>
<text x="807" y="682.1" font-size="6.5" fill="#222" >GREEN</text>
<path d="M781.5 510.4 L1038.6 510.4 L1038.6 548.2" stroke="#111" stroke-width="1" fill="none" />
<path d="M781.5 523.8 L1028.2 523.8 L1028.2 536.5 L1043.9 554.2 L1076.7 554.2" stroke="#111" stroke-width="1" fill="none" />
<path d="M1029.8 556 L1038.6 548.2 L1071.5 548.2 L1076.7 554.2" stroke="#111" stroke-width="1" fill="none" />
<circle cx="1038.6" cy="548.2" r="1.4" fill="#111"/>
<circle cx="1076.7" cy="554.2" r="1.4" fill="#111"/>
<circle cx="1076.7" cy="572.9" r="1.4" fill="#111"/>
<path d="M781.5 537.1 L876.8 537.1 L926.8 562 L937 562" stroke="#111" stroke-width="1" fill="none" />
<path d="M781.5 550.5 L872.9 550.5 L920.3 574.2 L920.3 611.5 L940.6 611.5" stroke="#111" stroke-width="1" fill="none" />
<path d="M781.5 563.8 L869.8 563.8 L905.5 582 L905.5 617.2 L926.8 617.2 L946.4 630.2" stroke="#111" stroke-width="1" fill="none" />
<path d="M781.5 577.2 L866.4 577.2 L898.4 592.4 L898.4 624.5 L930.2 624.5 L946.4 630.2" stroke="#444" stroke-width="1" fill="none" />
<path d="M781.5 590.6 L863.8 590.6 L892.4 604.2 L892.4 630.2 L959 630.2" stroke="#111" stroke-width="1" fill="none" />
<path d="M781.5 603.9 L860.4 603.9 L885.4 616.7 L885.4 637.2 L927.6 637.2 L946.4 630.2" stroke="#111" stroke-width="1" fill="none" />
<path d="M781.5 617.3 L857.3 617.3 L878.1 628.1 L878.1 643.8 L926.8 643.8 L946.4 630.2" stroke="#111" stroke-width="1" fill="none" />
<path d="M941 628.600L947.500 630.200L941 631.800Z" fill="#111"/>
<path d="M781.5 630.6 L872.4 630.6 L872.4 657 L1025.1 657 L1025.1 631 L1013.4 631" stroke="#111" stroke-width="1" fill="none" />
<path d="M781.5 644 L865.1 644 L865.1 663.5 L1064.2 663.5 L1076.7 647.7" stroke="#333" stroke-width="1" fill="none" />
<path d="M781.5 657.4 L858.1 657.4 L858.1 670 L1070.7 670 L1070.7 663.5 L1076.7 647.7" stroke="#111" stroke-width="1" fill="none" />
<path d="M781.5 670.7 L851.6 670.7 L851.6 677 L1082.4 677 L1082.4 663.5 L1076.7 647.7" stroke="#111" stroke-width="1" fill="none" />
<path d="M781.5 684.1 L1090.2 684.1 L1090.2 663.5 L1076.7 647.7" stroke="#111" stroke-width="1" fill="none" />
<circle cx="1076.7" cy="647.7" r="1.4" fill="#111"/>
<path d="M1076.7 554.2 L1076.7 583.9 L1084.5 586.9 L1068.9 593 L1084.5 599 L1068.9 605.5 L1084.5 611.7 L1068.9 618 L1084.5 624.5 L1068.9 631 L1076.7 634.5 L1076.7 647.7" stroke="#111" stroke-width="1" fill="none" />
<text x="1087" y="601.3" font-size="4.8" fill="#222" >0.5 OHM</text>
<text x="1089" y="609.9" font-size="4.8" fill="#222" >5%</text>
<text x="1087" y="621" font-size="4.8" fill="#222" >240 W.</text>
<text x="1045.4" y="538.5" font-size="4.8" fill="#222" >RED (2)</text>
<circle cx="985.9" cy="583.6" r="53.6" stroke="#111" stroke-width="1" fill="none"/>
<text x="946.9" y="590.6" font-size="15" textLength="77" lengthAdjust="spacingAndGlyphs" fill="#222" >ALTERNATOR</text>
<text x="939.7" y="563.8" font-size="4.8" fill="#222" >ACTAP</text>
<text x="1010" y="558" font-size="4.8" fill="#222" >VALT</text>
<text x="941.9" y="611.2" font-size="4.8" fill="#222" >VFLDRTN</text>
<text x="960" y="630.8" font-size="4.8" fill="#222" >GND</text>
<text x="991.6" y="629.4" font-size="4.8" fill="#222" >VFLD</text>
<text transform="translate(1182.500 129.900) rotate(90)" font-size="24" font-weight="bold" fill="#000" textLength="329.500" lengthAdjust="spacingAndGlyphs">BLOCK DIAGRAM FOR LC9100</text>
<text transform="translate(1209.500 128.300) rotate(90)" font-size="18" font-weight="bold" font-style="italic" fill="#111" textLength="442" lengthAdjust="spacingAndGlyphs">9500HR / 9100 Series Recumbent Exercise Bikes</text>
<g font-family="Liberation Serif, serif"><text transform="translate(26.800 121.200) rotate(90)" font-size="14.500" fill="#1a1aff" stroke="#1a1aff" stroke-width=".35" textLength="50.700" lengthAdjust="spacingAndGlyphs">alslib.com</text>
<rect x="24.800" y="118" width="1.100" height="55.700" fill="#1a1aff"/>
<text transform="translate(26.800 179.500) rotate(90)" font-size="14.500" fill="#555" stroke="#555" stroke-width=".25" textLength="114.300" lengthAdjust="spacingAndGlyphs">manuals search engine</text></g>
<text x="955.4" y="298.6" font-size="4.8" textLength="53.6" lengthAdjust="spacingAndGlyphs" fill="#222" >MANDO ALTERNATOR</text>
<text x="1016.4" y="310.6" font-size="6" textLength="44.6" lengthAdjust="spacingAndGlyphs" fill="#222" >NOT TO SCALE</text>
<text x="1042.4" y="333.3" font-size="4.8" fill="#222" >OUTPUT</text>
<text x="1041.8" y="341.5" font-size="4.8" textLength="56.6" lengthAdjust="spacingAndGlyphs" fill="#222" >(1/4" RING TERMINALS)</text>
<text x="923.4" y="379.8" font-size="4.8" text-anchor="end" fill="#222" >AC TAP</text>
<text x="923.4" y="388" font-size="4.8" text-anchor="end" textLength="51" lengthAdjust="spacingAndGlyphs" fill="#222" >(#8 RING TERMINAL)</text>
<text x="1061" y="407.2" font-size="4.8" fill="#222" >GND</text>
<text x="1061" y="415.4" font-size="4.8" textLength="54.6" lengthAdjust="spacingAndGlyphs" fill="#222" >(#8 RING TERMINALS)</text>
<text x="924.2" y="431.2" font-size="4.8" text-anchor="end" textLength="43" lengthAdjust="spacingAndGlyphs" fill="#222" >FIELD EXCITATION</text>
<text x="924.2" y="438.6" font-size="4.8" text-anchor="end" textLength="52" lengthAdjust="spacingAndGlyphs" fill="#222" >(M5 RING TERMINAL)</text>
<text x="1026.8" y="449" font-size="4.8" textLength="33.5" lengthAdjust="spacingAndGlyphs" fill="#222" >FIELD RETURN</text>
<text x="1026.8" y="457.2" font-size="4.8" textLength="51" lengthAdjust="spacingAndGlyphs" fill="#222" >(M5 RING TERMINAL)</text>
<path d="M947 342.200C958 326.500 1009 326.500 1020.300 342.200C1021 343.500 1021 344.500 1020.300 345.500L1012.300 358.900C1003 350 964 350 955 358.900L946.500 345.500C945.800 344.500 945.800 343.500 947 342.200Z" stroke="#111" fill="#fff"/>
<circle cx="952.7" cy="345.8" r="2.7" stroke="#111" stroke-width="1.2" fill="none"/>
<circle cx="983.1" cy="338" r="2.7" stroke="#111" stroke-width="1.2" fill="none"/>
<circle cx="1013.3" cy="345.8" r="2.7" stroke="#111" stroke-width="1.2" fill="none"/>
<path d="M944 433.500L973.200 463.700C976 473.500 990.500 473.500 993.500 463.700L1022.200 433.500Z" stroke="#111" fill="#fff"/>
<path d="M955.500 438.200L973.800 456.500M1011.300 438.200L993 456.500M974.800 445L977.900 451.800M992.500 445L988.900 451.800" stroke="#111" stroke-width=".9" fill="none"/>
<circle cx="983.1" cy="460.8" r="10" stroke="#111" stroke-width="1" fill="#fff"/>
<circle cx="983.1" cy="460.8" r="4.7" stroke="#111" stroke-width="1.2" fill="none"/>
<path d="M944.500 369C936 381 933.500 404 941 422L945.500 436C962 447 1004 447 1020.500 436L1025 422C1033 404 1030.500 381 1021.500 369C1024 361 1017 357 1011.500 359.500C996 350.500 970 350.500 954.500 359.500C949 357 942 361 944.500 369Z" stroke="#111" fill="#fff" stroke-width="1.100"/>
<path d="M948 372C941 384 939 404 945 420M1018 372C1025 384 1027 404 1021 420" stroke="#111" fill="none" stroke-width=".8"/>
<path d="M947 431C962 444.500 1004 444.500 1019 431" stroke="#111" fill="none" stroke-width=".8"/>
<path d="M1027.500 386c4 2 5.500 9 4.500 15l-3 2" stroke="#111" fill="none" stroke-width=".9"/>
<path d="M966.5 361.5L982 357.8" stroke="#111" stroke-width="3.2" stroke-linecap="round"/>
<path d="M966.5 361.5L982 357.8" stroke="#fff" stroke-width="1.7000000000000002" stroke-linecap="round"/>
<path d="M969 367.2L982 364" stroke="#111" stroke-width="3.2" stroke-linecap="round"/>
<path d="M969 367.2L982 364" stroke="#fff" stroke-width="1.7000000000000002" stroke-linecap="round"/>
<path d="M971.7 373.8L979 370.8" stroke="#111" stroke-width="3.2" stroke-linecap="round"/>
<path d="M971.7 373.8L979 370.8" stroke="#fff" stroke-width="1.7000000000000002" stroke-linecap="round"/>
<path d="M998.8 361.5L1007.6 366.7" stroke="#111" stroke-width="3.2" stroke-linecap="round"/>
<path d="M998.8 361.5L1007.6 366.7" stroke="#fff" stroke-width="1.7000000000000002" stroke-linecap="round"/>
<path d="M996.7 367.7L1002.9 371.4" stroke="#111" stroke-width="3.8" stroke-linecap="round"/>
<path d="M996.7 367.7L1002.9 371.4" stroke="#fff" stroke-width="2.3" stroke-linecap="round"/>
<path d="M993.5 374.5L997.7 377.6" stroke="#111" stroke-width="3.6" stroke-linecap="round"/>
<path d="M993.5 374.5L997.7 377.6" stroke="#fff" stroke-width="2.1" stroke-linecap="round"/>
<path d="M991.5 380.7L995 382.8" stroke="#111" stroke-width="3" stroke-linecap="round"/>
<path d="M991.5 380.7L995 382.8" stroke="#fff" stroke-width="1.5" stroke-linecap="round"/>
<path d="M943.5 395.8L944.6 387.5" stroke="#111" stroke-width="2.8" stroke-linecap="round"/>
<path d="M943.5 395.8L944.6 387.5" stroke="#fff" stroke-width="1.2999999999999998" stroke-linecap="round"/>
<path d="M949.3 392.7L955.5 378.1" stroke="#111" stroke-width="3.2" stroke-linecap="round"/>
<path d="M949.3 392.7L955.5 378.1" stroke="#fff" stroke-width="1.7000000000000002" stroke-linecap="round"/>
<path d="M956.6 393.8L963.3 381.3" stroke="#111" stroke-width="3.2" stroke-linecap="round"/>
<path d="M956.6 393.8L963.3 381.3" stroke="#fff" stroke-width="1.7000000000000002" stroke-linecap="round"/>
<path d="M964.4 394.8L968.5 386.5" stroke="#111" stroke-width="3.2" stroke-linecap="round"/>
<path d="M964.4 394.8L968.5 386.5" stroke="#fff" stroke-width="1.7000000000000002" stroke-linecap="round"/>
<path d="M947.2 381.3L950.8 374.5" stroke="#111" stroke-width="2.6" stroke-linecap="round"/>
<path d="M947.2 381.3L950.8 374.5" stroke="#fff" stroke-width="1.1" stroke-linecap="round"/>
<path d="M1001.9 396.9L1002.9 391.7" stroke="#111" stroke-width="3.2" stroke-linecap="round"/>
<path d="M1001.9 396.9L1002.9 391.7" stroke="#fff" stroke-width="1.7000000000000002" stroke-linecap="round"/>
<path d="M1006.6 400L1009.2 388.5" stroke="#111" stroke-width="3.2" stroke-linecap="round"/>
<path d="M1006.6 400L1009.2 388.5" stroke="#fff" stroke-width="1.7000000000000002" stroke-linecap="round"/>
<path d="M1014.4 401L1013.3 386.5" stroke="#111" stroke-width="3.2" stroke-linecap="round"/>
<path d="M1014.4 401L1013.3 386.5" stroke="#fff" stroke-width="1.7000000000000002" stroke-linecap="round"/>
<path d="M1018.5 381.3L1021.1 387.5" stroke="#111" stroke-width="2.6" stroke-linecap="round"/>
<path d="M1018.5 381.3L1021.1 387.5" stroke="#fff" stroke-width="1.1" stroke-linecap="round"/>
<path d="M1022.7 402L1023.2 392.7" stroke="#111" stroke-width="2.8" stroke-linecap="round"/>
<path d="M1022.7 402L1023.2 392.7" stroke="#fff" stroke-width="1.2999999999999998" stroke-linecap="round"/>
<path d="M966 405.500V397C966 374 1000.300 374 1000.300 397V405.400L1010.200 417V429.400C1008 435 1003 439.300 996.700 439.300H971.700C965 439.300 959.200 436 959.200 431.500V416.900Z" stroke="#111" fill="#fff"/>
<rect x="973.8" y="417.5" width="19.2" height="4" stroke="#111" stroke-width="0.9" fill="none" rx="2"/>
<rect x="973.8" y="423.2" width="19.2" height="4" stroke="#111" stroke-width="0.9" fill="none" rx="2"/>
<rect x="973.8" y="429" width="19.2" height="4" stroke="#111" stroke-width="0.9" fill="none" rx="2"/>
<circle cx="967.5" cy="433.3" r="5" stroke="#111" stroke-width="0.9" fill="#fff"/>
<circle cx="948.2" cy="412.9" r="3" stroke="#111" stroke-width="0.8" fill="#fff"/>
<text x="983.5" y="396.5" font-size="3.2" text-anchor="middle" fill="#555" >MANDO</text>
<text x="983.5" y="401.5" font-size="2.6" text-anchor="middle" fill="#666" >MARINE</text>
<path d="M984 360L992 362.500L991 371L985 370Z" stroke="#111" fill="#fff" stroke-width=".8"/>
<circle cx="988.1" cy="367.2" r="3.3" stroke="#111" stroke-width="0.9" fill="#fff"/>
<circle cx="988.1" cy="367.2" r="1.4" stroke="#111" stroke-width="0.8" fill="none"/>
<circle cx="950.3" cy="365.4" r="3.3" stroke="#111" stroke-width="1.7" fill="#666"/>
<path d="M948.3 365.4 L952.3 365.4" stroke="#ddd" stroke-width="0.6" fill="none" />
<circle cx="1015.9" cy="365.4" r="3.3" stroke="#111" stroke-width="1.7" fill="#666"/>
<path d="M1013.9 365.4 L1017.9 365.4" stroke="#ddd" stroke-width="0.6" fill="none" />
<circle cx="950.3" cy="431.3" r="3.3" stroke="#111" stroke-width="1.7" fill="#666"/>
<path d="M948.3 431.3 L952.3 431.3" stroke="#ddd" stroke-width="0.6" fill="none" />
<circle cx="1015.9" cy="431.3" r="3.3" stroke="#111" stroke-width="1.7" fill="#666"/>
<path d="M1013.9 431.3 L1017.9 431.3" stroke="#ddd" stroke-width="0.6" fill="none" />
<circle cx="964.9" cy="372.9" r="4.4" stroke="#111" stroke-width="1.2" fill="#fff"/>
<circle cx="964.9" cy="372.9" r="1.8" stroke="#111" stroke-width="1" fill="none"/>
<circle cx="1007.6" cy="378.6" r="5.2" stroke="#111" stroke-width="2.1" fill="#fff"/>
<circle cx="1007.6" cy="378.6" r="2" stroke="#111" stroke-width="1" fill="none"/>
<circle cx="951.9" cy="404.2" r="4" stroke="#111" stroke-width="1.6" fill="#fff"/>
<circle cx="951.9" cy="404.2" r="1.8" stroke="#111" stroke-width="1" fill="none"/>
<circle cx="966.5" cy="412.9" r="4.2" stroke="#111" stroke-width="1.4" fill="#fff"/>
<circle cx="966.5" cy="412.9" r="1.8" stroke="#111" stroke-width="1" fill="none"/>
<circle cx="999.3" cy="412.9" r="4.2" stroke="#111" stroke-width="1.4" fill="#fff"/>
<circle cx="999.3" cy="412.9" r="1.8" stroke="#111" stroke-width="1" fill="none"/>
<circle cx="1015.4" cy="420.3" r="4.3" stroke="#111" stroke-width="1.3" fill="#fff"/>
<circle cx="1015.4" cy="420.3" r="1.8" stroke="#111" stroke-width="1" fill="none"/>
<circle cx="983.1" cy="376.6" r="3.8" stroke="#111" stroke-width="1.6" fill="#777"/>
<path d="M981 376.6 L985.2 376.6" stroke="#ddd" stroke-width="0.6" fill="none" />
<text x="958.5" y="406.2" font-size="3.4" font-weight="bold" fill="#222" >Ls</text>
<text x="962.5" y="422.5" font-size="3.2" font-weight="bold" fill="#222" >EXC</text>
<text x="998.5" y="422.5" font-size="3.2" font-weight="bold" fill="#222" >FR</text>
<text x="1014" y="414" font-size="3.2" font-weight="bold" fill="#222" >E</text>
<text x="1015" y="376.5" font-size="3.2" font-weight="bold" fill="#222" >B</text>
<text x="968.5" y="381.5" font-size="3" font-weight="bold" fill="#222" >P</text>
<path d="M1041 332 L1032.8 332 L1017.2 362" stroke="#111" stroke-width="1" fill="none" />
<path d="M926.1 378.4 L961 373.4" stroke="#111" stroke-width="1" fill="none" />
<path d="M1058.800 406.300H1052C1040 407 1028 414 1019 419.300" stroke="#111" fill="none"/>
<path d="M927 429.900H935.700C948 429 958 420 964.500 414.200" stroke="#111" fill="none"/>
<path d="M1026 447.4 L1019.1 447.4 L1000.5 415.5" stroke="#111" stroke-width="1" fill="none" />
<path d="M6 416.500V427.500L11.700 422Z" fill="#666"/>
</svg>
<!--/DIAGRAM-->
<!--SIDE-->
<div class="abs" style="left:1301px;top:122px;width:19px;height:602px;background:#ebebeb"></div>
<div class="abs" style="left:1319px;top:122px;width:47px;height:602px;background:#fafafa;border-left:1px solid #dcdcdc"></div>
<svg class="abs" style="left:1284px;top:122px" width="18" height="602" viewBox="1284 122 18 602">
<defs><pattern id="chk" width="2" height="2" patternUnits="userSpaceOnUse"><rect width="2" height="2" fill="#fff"/><rect width="1" height="1" fill="#d4d0c8"/><rect x="1" y="1" width="1" height="1" fill="#d4d0c8"/></pattern></defs>
<rect x="1285" y="122" width="16" height="602" fill="url(#chk)"/>
<g id="sbu"><rect x="1285" y="122" width="16" height="16" fill="#d4d0c8"/><path d="M1285.500 137.500v-15h15" stroke="#fff" fill="none"/><path d="M1300.500 122v15.500h-15.500" stroke="#404040" fill="none"/><path d="M1299.500 123.500v13h-13.500" stroke="#808080" fill="none"/><path d="M1289.500 132h7l-3.500-4z" fill="#000"/></g>
<g><rect x="1285" y="567" width="16" height="16" fill="#d4d0c8"/><path d="M1285.500 582.500v-15h15" stroke="#fff" fill="none"/><path d="M1300.500 567v15.500h-15.500" stroke="#404040" fill="none"/><path d="M1299.500 568.500v13h-13.500" stroke="#808080" fill="none"/></g>
<g><rect x="1285" y="708" width="16" height="16" fill="#d4d0c8"/><path d="M1285.500 723.500v-15h15" stroke="#fff" fill="none"/><path d="M1300.500 708v15.500h-15.500" stroke="#404040" fill="none"/><path d="M1299.500 709.500v13h-13.500" stroke="#808080" fill="none"/><path d="M1289.500 714h7l-3.500 4z" fill="#000"/></g>
</svg>
<svg class="abs" style="left:1302px;top:122px" width="64" height="599" viewBox="1302 122 64 599" fill="none" stroke-linejoin="round" stroke-linecap="round">
<path d="M1313 417.500v10l-6-5z" fill="#555"/>
<!-- 1 export -->
<g stroke="#1a9a8f" stroke-width="1.800"><path d="M1343 154.500h-8.200v-19.300h9.200l5 5v4" fill="#d4efec"/><path d="M1343.800 135.500v5h5" stroke-width="1.400"/><path d="M1344.500 150h8.500M1349.800 146.500l3.500 3.500-3.500 3.500" stroke-width="2.500"/></g>
<!-- 2 create -->
<g stroke="#e8344a" stroke-width="1.800"><path d="M1337.500 184v-3.200h9l5.200 5.200v13.800h-14.200v-6" fill="#fadde0"/><path d="M1346.300 181v5.200h5.200" stroke-width="1.400"/><rect x="1332.500" y="185" width="7.500" height="5.500" fill="#e8344a" stroke-width="1"/></g>
<!-- 3 organize -->
<g stroke="#d8308a" stroke-width="1.700"><rect x="1333" y="227" width="20.500" height="8.300" fill="#f8d8ea"/><rect x="1333" y="239.300" width="8.600" height="7.700" fill="#f8d8ea"/><path d="M1346 240.500h7.800M1346 243.300h7.800M1346 246.100h7.800" stroke-width="1.100"/></g>
<!-- 4 comment -->
<path d="M1334.500 273.300h17c.8 0 1.300.5 1.300 1.300v12.400c0 .8-.5 1.300-1.300 1.300h-7.500l-4.500 5v-5h-5c-.8 0-1.300-.5-1.300-1.300v-12.400c0-.8.500-1.300 1.300-1.300z" fill="#d8b421" stroke="none"/><path d="M1337.500 278.400h11M1337.500 282.500h11" stroke="#fbf3d0" stroke-width="1.600"/>
<!-- 5 combine -->
<g stroke="#5b5be8" stroke-width="2.100"><path d="M1344.800 323.500v-3h5.200l3.800 3.800v8.700h-9"/><path d="M1335 326.500v-6h5.800l3.700 3.500v9h-9.500v-3"/><path d="M1331.800 323.200h5" stroke-width="2.800"/><rect x="1337.300" y="326.800" width="4.200" height="3.800" fill="#c4c4f6" stroke="none"/><path d="M1343.500 334v3.200" stroke-width="2.600"/><path d="M1339.600 336.600h7.800l-3.900 4.300z" fill="#5b5be8" stroke-width="1"/></g>
<!-- 6 pen -->
<g><path d="M1337.900 375.700L1348.900 365.700a2.400 2.400 0 0 1 3.200 3.600L1341.100 379.300Z" stroke="#d8308a" stroke-width="1.900" fill="#fbe3f0"/><path d="M1332 383.100L1337.500 376.500L1341.500 380L1342.500 378.600H1354.300V383.100Z" fill="#d8308a" stroke="none"/></g>
<!-- 7 shield -->
<path d="M1343 411l8.200 2.800v7.500c0 5-3.700 8.600-8.200 10.500-4.500-1.900-8.200-5.500-8.200-10.500v-7.500z" stroke="#4a5cf0" stroke-width="1.900" fill="#eceefd"/><path d="M1343 412.500v18.500c-3.800-1.800-7-5-7-9.500v-6.700z" fill="#c9cff8" stroke="none"/>
<!-- 8 compress -->
<g stroke="#e0283a" stroke-width="1.800"><path d="M1338 458.500v-3h7.300l4.700 4.700v11.300h-12v-5" fill="#f8dcdf"/><path d="M1345 455.700v4.700h4.700" stroke-width="1.300"/><rect x="1334.700" y="459.300" width="6" height="4.500" fill="#e0283a" stroke-width="1"/><path d="M1334.500 476.700h9.500M1349.500 476.700h3" stroke-width="1.500"/><circle cx="1346.800" cy="476.700" r="1.500" stroke-width="1.200"/></g>
<!-- 9 sign -->
<g stroke="#8a4ad8" stroke-width="1.900"><path d="M1346.800 503.300c1.700-1.500 4.600 1 3.300 2.900l-10.500 12.300-6.800 3.600 2.400-7.300z" fill="#e6d9f8"/><path d="M1341 522c1-3 3-5.500 3.800-4.500.8 1-1.500 4.500-.3 4.700 1.300.2 2.600-4.300 3.700-3.800 1 .5-.6 3.600.5 3.800 1 .2 2.500-1.300 4.300-2.500" stroke-width="1.500"/></g>
<!-- 10 doc comment -->
<g stroke="#d8b421" stroke-width="1.800"><path d="M1343 566.300h-10v-18.500h8.500l4.800 4.800v6" fill="#f8efc8"/><path d="M1341.300 548v5h5" stroke-width="1.300"/><path d="M1343.500 559.500h10.500v7.500h-5l-2 2.300v-2.300h-3.500z" fill="#d8b421" stroke-width="1.200"/><path d="M1346.500 562h4.800M1346.500 564.300h4.800" stroke="#fff" stroke-width="0.900"/></g>
<!-- 11 wrench -->
<g><path d="M1334.500 610l9.500-9.300" stroke="#666" stroke-width="3.200"/><path d="M1350.200 595.300l-3 3 .5 2.300 2.300.5 3-3c1.200 3-1.200 6.300-4.600 5.900-3-.4-4.700-3.300-4-5.900.700-2.600 3.300-4 5.800-2.800z" fill="#666" stroke="#666" stroke-width="1"/><circle cx="1349.500" cy="611" r="5.300" fill="#666" stroke="#fafafa" stroke-width="1.200"/><path d="M1346.800 611h5.400M1349.500 608.300v5.400" stroke="#fff" stroke-width="1.500"/></g>
<path d="M1328 677.500h29" stroke="#d0d0d0" stroke-width="1"/>
<g stroke="#666" stroke-width="1.800"><path d="M1340.200 693.500v15.500" stroke-width="2"/><path d="M1344.500 701.300h8M1349.300 697.800l3.500 3.500-3.500 3.500"/></g>
</svg>
<!--RIGHT-->
<svg class="abs" style="left:1310px;top:0" width="56" height="18" viewBox="1310 0 56 18">
<g><rect x="1314" y="2" width="15" height="14" fill="#d4d0c8"/><path d="M1314.500 15.500v-13h14" stroke="#fff" fill="none"/><path d="M1328.500 2v13.500h-14.500" stroke="#404040" fill="none"/><path d="M1327.500 3v11.500h-12.500" stroke="#808080" fill="none"/><rect x="1318" y="12" width="6" height="2" fill="#000"/></g>
<g><rect x="1330" y="2" width="16" height="14" fill="#d4d0c8"/><path d="M1330.500 15.500v-13h15" stroke="#fff" fill="none"/><path d="M1345.500 2v13.500h-15.500" stroke="#404040" fill="none"/><path d="M1344.500 3v11.500h-13.500" stroke="#808080" fill="none"/><path d="M1336.500 7v-2.500h6v5h-2.500" stroke="#000" fill="none"/><path d="M1336 4.500h7" stroke="#000"/><rect x="1333.500" y="8.500" width="6" height="4.500" stroke="#000" fill="none"/><path d="M1333 8.500h7" stroke="#000"/></g>
<g><rect x="1348" y="2" width="16" height="14" fill="#d4d0c8"/><path d="M1348.500 15.500v-13h15" stroke="#fff" fill="none"/><path d="M1363.500 2v13.500h-15.500" stroke="#404040" fill="none"/><path d="M1362.500 3v11.500h-13.500" stroke="#808080" fill="none"/><path d="M1352 5l8 8M1360 5l-8 8" stroke="#000" stroke-width="1.700"/></g>
</svg>
<svg class="abs" style="left:1200px;top:43px" width="26" height="26" viewBox="0 0 26 26"><circle cx="13.400" cy="12.700" r="9.500" fill="none" stroke="#666" stroke-width="2.100"/><text x="13.400" y="17.800" text-anchor="middle" font-family="Liberation Sans" font-weight="bold" font-size="14" fill="#666">?</text></svg>

<div id="task" class="abs"></div>
<!--TASKICONS-->
<svg class="abs" style="left:0;top:724px" width="1366" height="44" viewBox="0 724 1366 44" font-family="Liberation Sans">
<rect x="0" y="724" width="1366" height="44" fill="#d4d0c8"/>
<path d="M0 725.500h1366" stroke="#fff"/>
<g><rect x="2" y="728" width="52" height="38" fill="#d4d0c8"/><path d="M2.5 765.500v-37h51" stroke="#fff" fill="none"/><path d="M53.5 728v37.500h-52" stroke="#404040" fill="none"/><path d="M52.5 729v35.500h-50" stroke="#808080" fill="none"/></g><g><rect x="63" y="728" width="48" height="38" fill="#d4d0c8"/><path d="M63.5 765.500v-37h47" stroke="#fff" fill="none"/><path d="M110.5 728v37.500h-48" stroke="#404040" fill="none"/><path d="M109.5 729v35.500h-46" stroke="#808080" fill="none"/></g><g><rect x="113" y="728" width="40" height="38" fill="#d4d0c8"/><path d="M113.5 765.500v-37h39" stroke="#fff" fill="none"/><path d="M152.5 728v37.500h-40" stroke="#404040" fill="none"/><path d="M151.5 729v35.500h-38" stroke="#808080" fill="none"/></g><g><rect x="163" y="728" width="47" height="38" fill="#d4d0c8"/><path d="M163.5 765.500v-37h46" stroke="#fff" fill="none"/><path d="M209.5 728v37.500h-47" stroke="#404040" fill="none"/><path d="M208.5 729v35.500h-45" stroke="#808080" fill="none"/></g><g><rect x="213" y="728" width="47" height="38" fill="#d4d0c8"/><path d="M213.5 765.500v-37h46" stroke="#fff" fill="none"/><path d="M259.5 728v37.500h-47" stroke="#404040" fill="none"/><path d="M258.5 729v35.500h-45" stroke="#808080" fill="none"/></g><g><rect x="263" y="728" width="48" height="38" fill="#fff"/><path d="M263.5 765.500v-37h47" stroke="#404040" fill="none"/><path d="M264.5 764.500v-35h45" stroke="#808080" fill="none"/><path d="M310.5 728v37.500h-48" stroke="#fff" fill="none"/></g>
<path d="M156.500 728v38M160.500 728v38" stroke="#404040"/><path d="M155.500 728v38M159.500 728v38" stroke="#808080"/>
<!-- start -->
<g transform="translate(1.600 -0.500)"><path d="M5.500 741.500c2-1.200 4-1.200 6 0l-1.500 5.500c-2-1.200-4-1.200-6 0z" fill="#e85a2a" transform="rotate(8 8 744)"/><path d="M12.500 742c2 1.200 4 1.200 6 0l-1.500 5.500c-2 1.200-4 1.200-6 0z" fill="#6ab83a" transform="rotate(8 15 744)"/><path d="M4 748c2-1.200 4-1.200 6 0l-1.500 5.500c-2-1.200-4-1.200-6 0z" fill="#3a80d8" transform="rotate(8 7 750)"/><path d="M11 748.500c2 1.200 4 1.200 6 0l-1.500 5.500c-2 1.200-4 1.200-6 0z" fill="#f4b820" transform="rotate(8 14 751)"/></g>
<text x="21" y="750.800" font-size="13" font-weight="bold" fill="#000">Start</text>
<!-- opera -->
<ellipse cx="87" cy="747.500" rx="15" ry="15" fill="#e0202c"/><ellipse cx="87" cy="747.500" rx="7.500" ry="11.500" fill="#d4d0c8"/><path d="M96 735.500a15 15 0 0 1 0 24a15 17 0 0 0 0-24z" fill="#b01020"/>
<!-- folder -->
<g><path d="M118.500 738h10l2 2h17v22h-29z" fill="#e8c860"/><rect x="120" y="735.500" width="11" height="4" fill="#fff"/><rect x="121" y="735.500" width="3.500" height="2.500" fill="#20a040"/><rect x="128" y="737" width="3" height="2.500" fill="#d03020"/><rect x="132" y="738.500" width="12" height="3.500" fill="#fff"/><rect x="137" y="739" width="3" height="2.500" fill="#2080e0"/><path d="M118 743h30v18.500h-30z" fill="#f4dc8c"/><path d="M121 762v-10.500c0-1 .5-1.500 1.500-1.500h21c1 0 1.500.5 1.500 1.500v10.500h-5.500v-7h-13v7z" fill="#58a8e0"/><path d="M121 762v-10.500c0-1 .5-1.500 1.500-1.500h21c1 0 1.500.5 1.500 1.500v2h-24z" fill="#8cc8f0"/></g>
<!-- ps -->
<rect x="174" y="733.200" width="26.200" height="25" fill="#1c1c30" stroke="#30c0ff" stroke-width="2"/><text x="178.700" y="752" font-size="18.500" fill="#38c4ff" textLength="16.400" lengthAdjust="spacingAndGlyphs">Ps</text>
<!-- photos -->
<g><path d="M223 744c-1.500 8 6 16.500 17 17" stroke="#f0b040" stroke-width="2.600" fill="none" stroke-linecap="round"/>
<g transform="rotate(-6 230 740.500)"><rect x="225.800" y="735.800" width="9" height="9.500" fill="#fff"/><rect x="226.800" y="736.800" width="7" height="7.500" fill="#7cc040"/><rect x="229" y="738" width="4.800" height="6.300" fill="#f0a020"/></g>
<g transform="rotate(4 230 751)"><rect x="223.800" y="745" width="12.500" height="11.500" fill="#fff"/><rect x="224.800" y="746" width="10.500" height="9.500" fill="#90c8f0"/><rect x="229" y="746" width="6.300" height="7" fill="#e86818"/></g>
<g transform="rotate(-5 242.500 752.500)"><rect x="236.300" y="747.500" width="12.500" height="9.500" fill="#fff"/><rect x="237.300" y="748.500" width="10.500" height="7.500" fill="#88c850"/><rect x="237.300" y="748.500" width="5" height="5" fill="#f08020"/></g>
<g transform="rotate(3 242.500 741.500)"><rect x="234.400" y="735" width="16.300" height="13.300" fill="#fff"/><rect x="235.500" y="736.100" width="14.100" height="11.100" fill="#a0d0f4"/><circle cx="241" cy="742.500" r="4.800" fill="#f07010"/><circle cx="241" cy="743" r="1.800" fill="#c04808"/><rect x="235.500" y="745" width="14.100" height="2.200" fill="#e87818"/></g>
</g>
<!-- acrobat -->
<defs><linearGradient id="acg" x1="0" y1="0" x2="0" y2="1"><stop offset="0" stop-color="#e81c20"/><stop offset="1" stop-color="#a80c10"/></linearGradient></defs>
<rect x="273.500" y="732" width="28" height="28" fill="url(#acg)"/><path d="M280.500 753c4-3 7.500-10 7-15.500c-.3-2.500-2.300-2-2 .5c.700 5 4.500 10 9.500 11.500c2.500.7 3-1.700.5-2c-5-.6-11 2-15 5.500z" fill="none" stroke="#fff" stroke-width="1.300" stroke-linejoin="round"/>
<!-- tray -->
<path d="M1078.500 765.500v-37h288" stroke="#808080" fill="none"/><path d="M1078 766.500h288" stroke="#fff" fill="none"/>
<g><rect x="1085" y="739" width="16" height="16" rx="1.500" fill="#e87820"/><path d="M1088.500 752.800h8.500M1089.500 750.600h6.500M1089.500 748.300h6" stroke="#fff" stroke-width="1.200"/><path d="M1096 747.800c2-.3 2.500 2 -.3 2.600" stroke="#fff" stroke-width=".9" fill="none"/><path d="M1093.800 740.800c-2.800 2 1.800 3.200-.8 6" stroke="#fff" stroke-width="1.200" fill="none"/></g>
<g><circle cx="1116.800" cy="747" r="7.200" fill="#f4f4f4" stroke="#000" stroke-width="1"/><path d="M1112.500 743.500l2.500-1.500 2 1.500-1.500 2.500z" fill="#000"/><path d="M1114 750.500l2-1 1 2z" fill="#000"/><circle cx="1118.500" cy="748" r="3" fill="#20b0e0"/><path d="M1117 749.500l2-3 1.500 2z" fill="#40c040"/><path d="M1119.500 745l1.500 2" stroke="#f0e020" stroke-width="1.200"/><circle cx="1116.800" cy="747" r="6.800" fill="none" stroke="#e80000" stroke-width="1.900"/><path d="M1111.800 752l10-10" stroke="#e80000" stroke-width="2"/></g>
<g><path d="M1133 746l8-3.500 8 3.500v9l-8 1-8-1z" fill="#e89020"/><path d="M1141 742.500v13.500" stroke="#f8d8a0" stroke-width="1.500"/><path d="M1139 738.500h4v5h-4z" fill="#e87818"/><path d="M1143 739h6v2h-6z" fill="#e87818"/></g>
<g><rect x="1160.500" y="740.500" width="10" height="14.500" rx="2" fill="#f4f4f4" stroke="#707070" stroke-width="1.300"/><rect x="1163" y="738.500" width="5" height="2" fill="#707070"/><rect x="1162.500" y="743.500" width="6" height="9.500" fill="#fff" stroke="#909090" stroke-width="0.800"/></g>
<g><path d="M1181.500 744h3l4.500-4v14l-4.500-4h-3z" fill="#f4f4f4" stroke="#707070" stroke-width="1"/><path d="M1191 743.500c1.700 2 1.700 5 0 7M1193.500 741.500c2.700 3.300 2.700 7.700 0 11" stroke="#808080" stroke-width="1.300" fill="none"/></g>
<g><path d="M1206.500 739.500v16" stroke="#606060" stroke-width="2.600"/><path d="M1206.500 739.500v16" stroke="#f4f4f4" stroke-width="1"/><path d="M1208.500 740.500c4-1.500 6 2 12 0l-3 4 2 4c-5 1.500-7-1.500-11 0z" fill="#f8f8f8" stroke="#606060" stroke-width="1"/></g>
<g fill="#f4f4f4" stroke="#707070" stroke-width="0.900"><rect x="1230" y="751" width="3" height="3.500"/><rect x="1234" y="748" width="3" height="6.500"/><rect x="1238" y="744.500" width="3" height="10"/><rect x="1242" y="741" width="3" height="13.500"/></g>
<g><rect x="1253" y="739" width="16" height="16" rx="1.500" fill="#1c90f0"/><path d="M1257 743.500h8.500c1 0 1.500.5 1.500 1.500v4c0 1-.5 1.500-1.500 1.500h-3.500l-3 2.500v-2.500h-2c-1 0-1.500-.5-1.500-1.500v-4c0-1 .5-1.500 1.500-1.500z" fill="#fff"/><path d="M1259.500 748l1.500-2 1.500 1.500 1.500-2" stroke="#1c90f0" stroke-width="0.900" fill="none"/></g>
<text x="1311.300" y="742.700" font-size="11" fill="#000" text-anchor="middle">11:01</text>
<text x="1311" y="758.600" font-size="11" fill="#000" text-anchor="middle">2019-03-11</text>
<g><rect x="1347" y="742" width="14" height="10" fill="#3070c8"/><rect x="1348" y="743" width="12" height="6" fill="#4888d8"/><path d="M1349 751.500h12" stroke="#303030" stroke-width="1.500"/></g><path d="M1363.500 728v38" stroke="#fff"/>
</svg>

</body></html>
